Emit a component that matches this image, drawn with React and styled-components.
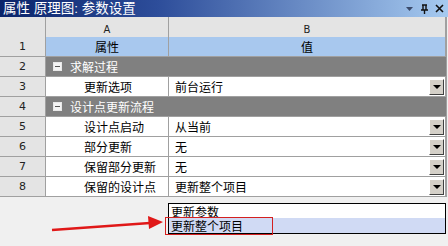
import React from "react";
import styled, { createGlobalStyle } from "styled-components";

const Global = createGlobalStyle`
  html, body { margin: 0; padding: 0; background: #f0f0f0; }
  body { font-family: "Liberation Sans", "Noto Sans CJK SC", sans-serif; font-size: 12px; }
`;

const Page = styled.div`
  position: relative;
  width: 448px;
  height: 246px;
  overflow: hidden;
  background: #f0f0f0;
  display: flex;
  flex-direction: column;
`;

const TitleBar = styled.div`
  height: 17px;
  flex: none;
  display: flex;
  align-items: center;
  padding: 0 4px 0 3px;
  background: linear-gradient(to right, #0a246a 0%, #2d4d9a 35%, #a6caf0 100%);
  color: #fff;
  font-size: 13.5px;
  line-height: 16px;
`;

const TitleText = styled.span`
  flex: 1;
  white-space: pre;
`;

const TitleIcons = styled.div`
  display: flex;
  align-items: center;
  gap: 6px;
  color: #111;
`;

const Grid = styled.div`
  display: grid;
  grid-template-columns: 46px 123px 277px;
  grid-auto-rows: 20px;
  width: 446px;
  border-right: 1px solid #a0a0a0;
`;

const HeadCell = styled.div`
  height: 25px;
  box-sizing: border-box;
  background: #e4e4e4;
  border-right: 1px solid #a0a0a0;
  border-bottom: 1px solid #a0a0a0;
  display: flex;
  align-items: center;
  justify-content: center;
  font-family: "DejaVu Sans", sans-serif;
  font-size: 10px;
  color: #222;
`;

const NumCell = styled.div`
  box-sizing: border-box;
  background: #e4e4e4;
  border-right: 1px solid #a0a0a0;
  border-bottom: 1px solid #a0a0a0;
  display: flex;
  align-items: center;
  justify-content: center;
  font-family: "DejaVu Sans", sans-serif;
  font-size: 11px;
  color: #222;
`;

const Cell = styled.div`
  box-sizing: border-box;
  position: relative;
  background: ${p => (p.$hdr ? "#a8c8ee" : "#fff")};
  border-right: 1px solid #a0a0a0;
  border-bottom: 1px solid #a0a0a0;
  display: flex;
  align-items: center;
  justify-content: ${p => (p.$center ? "center" : "flex-start")};
  padding-left: ${p => (p.$indent ? `${p.$indent}px` : "0")};
  color: #000;
  white-space: nowrap;
`;

const GroupCell = styled.div`
  grid-column: 2 / span 2;
  box-sizing: border-box;
  background: #808080;
  border-bottom: 1px solid #a0a0a0;
  display: flex;
  align-items: center;
  padding-left: 7px;
  gap: 8px;
  color: #fff;
`;

const Collapse = styled.span`
  width: 7px;
  height: 7px;
  border: 1px solid #e8e8e8;
  background: #f4f4f4;
  position: relative;
  &::after {
    content: "";
    position: absolute;
    left: 1px;
    right: 1px;
    top: 3px;
    height: 1px;
    background: #555;
  }
`;

const DropBtn = styled.span`
  position: absolute;
  right: 1px;
  top: 2px;
  width: 13px;
  height: 14px;
  background: #d4d0c8;
  border-top: 1px solid #fff;
  border-left: 1px solid #fff;
  border-right: 1px solid #404040;
  border-bottom: 1px solid #404040;
  display: flex;
  align-items: center;
  justify-content: center;
  &::after {
    content: "";
    border-left: 4px solid transparent;
    border-right: 4px solid transparent;
    border-top: 4px solid #000;
  }
`;

const Popup = styled.div`
  position: absolute;
  left: 168px;
  top: 203px;
  width: 276px;
  height: 29px;
  background: #fff;
  border: 1px solid #000;
  display: flex;
  flex-direction: column;
`;

const PopItem = styled.div`
  height: ${p => (p.$sel ? 15 : 14)}px;
  display: flex;
  align-items: center;
  padding-left: 2px;
  background: ${p => (p.$sel ? "#d0daf4" : "#fff")};
  color: #000;
`;

const Highlight = styled.div`
  position: absolute;
  left: 165px;
  top: 217px;
  width: 108px;
  height: 18px;
  border: 1px solid #d42020;
  box-sizing: border-box;
`;

const Arrow = styled.svg`
  position: absolute;
  left: 0;
  top: 0;
`;

const rows = [
  { n: 3, a: "更新选项", b: "前台运行" },
  "设计点更新流程",
  { n: 5, a: "设计点启动", b: "从当前" },
  { n: 6, a: "部分更新", b: "无" },
  { n: 7, a: "保留部分更新", b: "无" },
  { n: 8, a: "保留的设计点", b: "更新整个项目" },
];

export default function App() {
  return (
    <Page>
      <Global />
      <TitleBar>
        <TitleText>属性 原理图: 参数设置</TitleText>
        <TitleIcons>
          <svg width="9" height="9" viewBox="0 0 9 9"><path d="M1 3h7L4.5 7z" fill="#3a4a6a" /></svg>
          <svg width="9" height="10" viewBox="0 0 9 10"><path d="M2 1h5M3 1v5M6 1v5M1 6h7M4.5 6v4" stroke="#111" strokeWidth="1.4" fill="none" /></svg>
          <svg width="9" height="9" viewBox="0 0 9 9"><path d="M1 1l7 7M8 1l-7 7" stroke="#111" strokeWidth="1.6" /></svg>
        </TitleIcons>
      </TitleBar>
      <Grid>
        <HeadCell />
        <HeadCell>A</HeadCell>
        <HeadCell>B</HeadCell>
        <NumCell>1</NumCell>
        <Cell $hdr $center>属性</Cell>
        <Cell $hdr $center>值</Cell>
        <NumCell>2</NumCell>
        <GroupCell><Collapse />求解过程</GroupCell>
        {rows.map((r, i) =>
          typeof r === "string" ? (
            <React.Fragment key={i}>
              <NumCell>4</NumCell>
              <GroupCell><Collapse />{r}</GroupCell>
            </React.Fragment>
          ) : (
            <React.Fragment key={i}>
              <NumCell>{r.n}</NumCell>
              <Cell $indent={38}>{r.a}</Cell>
              <Cell $indent={6}>
                {r.b}
                <DropBtn />
              </Cell>
            </React.Fragment>
          )
        )}
      </Grid>
      <Popup>
        <PopItem>更新参数</PopItem>
        <PopItem $sel>更新整个项目</PopItem>
      </Popup>
      <Highlight />
      <Arrow width="448" height="246" viewBox="0 0 448 246">
        <line x1="52" y1="230" x2="150" y2="223" stroke="#e01818" strokeWidth="2.5" />
        <path d="M163 222 L148 216 L149 229 Z" fill="#e01818" />
      </Arrow>
    </Page>
  );
}
